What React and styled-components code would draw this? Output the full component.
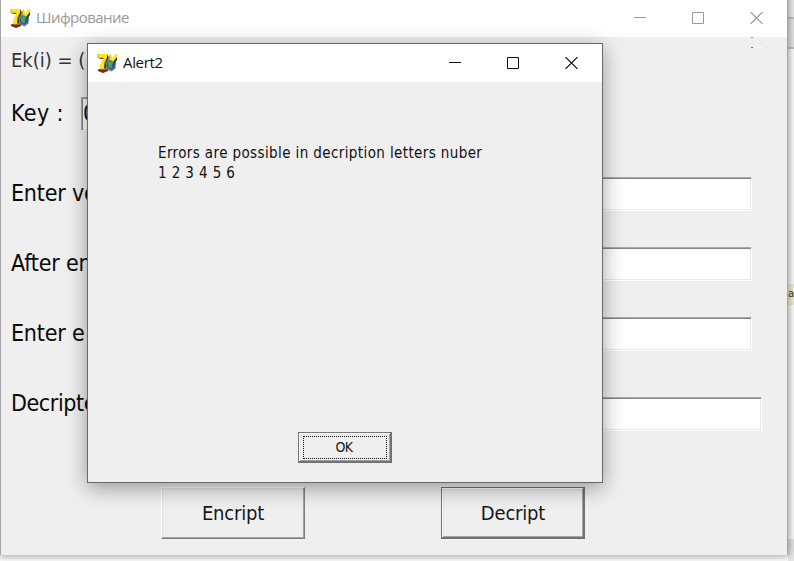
import React from "react";
import styled, { createGlobalStyle } from "styled-components";

const GlobalStyle = createGlobalStyle`
  * { box-sizing: border-box; }
  body { margin: 0; overflow: hidden; background: #fff; }
`;

const formFont = '"DejaVu Sans Condensed", "DejaVu Sans", sans-serif';

const Desktop = styled.div`
  position: relative;
  display: grid;
  grid-template-columns: 1fr 6px;
  width: 794px;
  height: 561px;
  overflow: hidden;
  background: #fff;
`;

const SideStrip = styled.div`
  grid-column: 2;
  display: flex;
  flex-direction: column;
`;

const StripPart = styled.div`
  height: ${(p) => p.$h}px;
  background: ${(p) => p.$bg};
  border-bottom: ${(p) => (p.$line ? "2px solid #c5c5c5" : "0")};
  font: 10px/20px "DejaVu Sans", sans-serif;
  color: #333;
`;

const MainWindow = styled.section`
  position: absolute;
  left: 0;
  top: 0;
  width: 788px;
  height: 555px;
  overflow: hidden;
  background: #efefef;
  border: solid #a5a5a5;
  border-width: 0 1px 0 1px;
`;

const MainShadow = styled.div`
  position: absolute;
  left: 0;
  top: -20px;
  width: 788px;
  height: 575px;
  box-shadow: 0 0 8px 1px rgba(0, 0, 0, 0.42);
`;

const TitleBar = styled.header`
  display: flex;
  align-items: center;
  height: ${(p) => p.$h}px;
  padding-left: 9px;
  padding-bottom: ${(p) => p.$lift || 0}px;
  background: #fff;
  color: ${(p) => p.$color};
`;

const Title = styled.h1`
  flex: 1;
  margin: 0 0 0 5px;
  padding-bottom: ${(p) => p.$lift}px;
  font: 400 15px/20px "Open Sans", "Noto Sans", sans-serif;
  letter-spacing: ${(p) => p.$spacing}px;
`;

const Controls = styled.div`
  display: flex;
  gap: 46px;
  padding-right: ${(p) => p.$right}px;
  svg { display: block; }
`;

const Form = styled.div`
  display: flex;
  flex-direction: column;
  height: 518px;
  padding-left: 10px;
  font-family: ${formFont};
  color: #0a0a0a;
`;

const Row = styled.div`
  display: flex;
  align-items: flex-start;
  height: ${(p) => p.$h}px;
`;

const Label = styled.label`
  flex: 0 0 ${(p) => p.$w}px;
  padding-top: ${(p) => p.$top}px;
  font-size: ${(p) => p.$size || 23}px;
  line-height: 26px;
  letter-spacing: ${(p) => p.$spacing ?? -0.2}px;
  color: ${(p) => p.$color || "#0a0a0a"};
  white-space: pre;
`;

const Field = styled.div`
  width: ${(p) => p.$w}px;
  height: 34px;
  padding: 2px 0 0 1px;
  background: #fff;
  border: 1px solid #fff;
  border-top-color: #aaa;
  border-left-color: #aaa;
  box-shadow: inset 1px 1px 0 #858585, inset -1px -1px 0 #e8e8e8;
  font-size: 23px;
  line-height: 26px;
`;

const FieldDrop = styled.div`
  padding-top: 10px;
`;

const Actions = styled.div`
  display: flex;
  gap: 136px;
  padding-left: 150px;
`;

const Button = styled.button`
  width: 144px;
  height: 52px;
  margin: 0;
  padding: 0 0 1px;
  border: 1px solid;
  border-color: ${(p) => (p.$active ? "#747474" : "#fff #808080 #808080 #fff")};
  box-shadow: ${(p) =>
    p.$active
      ? "inset -1px -1px 0 #6e6e6e, inset 1px 1px 0 #fff, inset -2px -2px 0 #a6a6a6, inset 2px 2px 0 #e3e3e3"
      : "inset -1px -1px 0 #a0a0a0, inset 1px 1px 0 #e3e3e3"};
  background: #efefef;
  font: 400 20px/26px ${formFont};
  letter-spacing: -0.2px;
  color: #171717;
`;

const Speck = styled.i`
  position: absolute;
  left: 750px;
  top: 37px;
  width: 12px;
  height: 12px;
  background: linear-gradient(#999, #999) 0 0 / 2px 1px no-repeat,
    linear-gradient(#777, #777) 0 10px / 2px 1px no-repeat,
    linear-gradient(#fff, #fff) 3px 10px / 8px 1px no-repeat;
`;

const Dialog = styled.section`
  position: absolute;
  left: 86px;
  top: 43px;
  width: 516px;
  height: 440px;
  background: #efefef;
  border: 1px solid #686868;
  box-shadow: 0 5px 20px rgba(0, 0, 0, 0.37);
`;

const DialogBody = styled.div`
  display: flex;
  flex-direction: column;
  justify-content: space-between;
  height: 400px;
  padding: 61px 0 19px 70px;
`;

const Message = styled.p`
  margin: 0;
  font: 400 15px/20px ${formFont};
  letter-spacing: ${(p) => p.$spacing}px;
  color: #111;
`;

const OkButton = styled(Button)`
  display: flex;
  align-items: center;
  width: 94px;
  height: 31px;
  margin-left: 140px;
  padding: 3px;
  font-size: 14px;
  line-height: 18px;
  letter-spacing: -0.7px;
`;

const Focus = styled.span`
  flex: 1;
  height: 23px;
  border: 1px dotted #111;
  margin: 0 1px;
  padding-right: 2px;
  line-height: 20px;
`;

function AppIcon() {
  return (
    <svg width="21" height="20" viewBox="0 0 21 20">
      <path d="M2 6h5L3 13v3h-1v2l4 2 5-2v-2l-2-1V11l3-6-2-4Z" fill="#4b2a20" />
      <path d="M1 1h9v4L7.5 10 7 16H3v-4l3.5-7H1Z" fill="#f7e71e" />
      <path d="M1 1v4h5.5M9.5 5 7.5 10" stroke="#a2921c" strokeWidth=".7" fill="none" />
      <path d="M1.5 16.5v1l4 1.3L10 17" stroke="#a51f18" strokeWidth="1.3" fill="none" />
      <path d="M3 16h6" stroke="#e9c02a" strokeWidth="1" />
      <path d="M8.5 9.5 11 7l6-.5 2 3-.5 6-4 3-5-2Z" fill="#777b80" />
      <circle cx="14" cy="12" r="4.2" fill="#35556e" />
      <path d="m11 9 3-1 2.5 2-2 2 1 2.5-2.5 1-2-3Z" fill="#46a566" />
      <path d="m15.5 13 2-1-1 3-2 1Z" fill="#1767b8" />
      <path d="m16 8 4-5v4l-3 4Z" fill="#37340e" />
      <path d="m14 7 4.5-6H20v3l-4 5Z" fill="#f4e62b" />
      <path d="M12 2.5 14 1l1 4-1.5 3L12 6Z" fill="#eadb25" />
      <path d="M12 3v3l1.5 2" stroke="#7d741d" strokeWidth=".8" fill="none" />
    </svg>
  );
}

function WindowControls({ right }) {
  return (
    <Controls $right={right}>
      <svg width="12" height="12"><path d="M0 5.5h12" stroke="currentColor" /></svg>
      <svg width="12" height="12"><path d="M.5.5h11v11H.5Z" fill="none" stroke="currentColor" /></svg>
      <svg width="13" height="12"><path d="m.5 0 12 12m0-12-12 12" stroke="currentColor" strokeWidth="1.1" /></svg>
    </Controls>
  );
}

const rows = [
  { label: "Enter vo", w: 741, h: 70 },
  { label: "After en", w: 741, h: 70 },
  { label: "Enter e", w: 741, h: 70 },
];

export default function App() {
  return (
    <>
      <GlobalStyle />
      <Desktop>
        <SideStrip>
          <StripPart $h={19} $bg="#f0f0f0" $line />
          <StripPart $h={30} $bg="#e8e8e8" $line />
          <StripPart $h={235} $bg="#fff" />
          <StripPart $h={21} $bg="#eff3d8">а</StripPart>
          <StripPart $h={234} $bg="#fff" />
          <StripPart $h={22} $bg="#e8e8e8" />
        </SideStrip>
        <MainShadow />
        <MainWindow>
          <TitleBar $h={37} $color="#999" $lift={2}>
            <AppIcon />
            <Title $spacing={-0.55} $lift={1}>Шифрование</Title>
            <WindowControls right={24} />
          </TitleBar>
          <Form>
            <Row $h={60}>
              <Label $w={300} $top={10} $size={20} $color="#333" $spacing={0}>Ek(i) = (</Label>
            </Row>
            <Row $h={80}>
              <Label $w={70} $top={3} $spacing={0.4}>Key :</Label>
              <Field $w={100}>0</Field>
            </Row>
            {rows.map((r) => (
              <Row key={r.label} $h={r.h}>
                <Label $w={300} $top={3}>{r.label}</Label>
                <Field $w={r.w - 300} />
              </Row>
            ))}
            <Row $h={100}>
              <Label $w={300} $top={3} $spacing={-0.4}>Decripte</Label>
              <FieldDrop><Field $w={451} /></FieldDrop>
            </Row>
            <Actions>
              <Button>Encript</Button>
              <Button $active>Decript</Button>
            </Actions>
          </Form>
          <Speck />
          <Dialog>
            <TitleBar $h={38} $color="#111">
              <AppIcon />
              <Title $spacing={-0.35} $lift={3}>Alert2</Title>
              <WindowControls right={24} />
            </TitleBar>
            <DialogBody>
              <div>
                <Message $spacing={0.39}>Errors are possible in decription letters nuber</Message>
                <Message $spacing={0.4}>1 2 3 4 5 6</Message>
              </div>
              <OkButton $active><Focus>OK</Focus></OkButton>
            </DialogBody>
          </Dialog>
        </MainWindow>
      </Desktop>
    </>
  );
}
